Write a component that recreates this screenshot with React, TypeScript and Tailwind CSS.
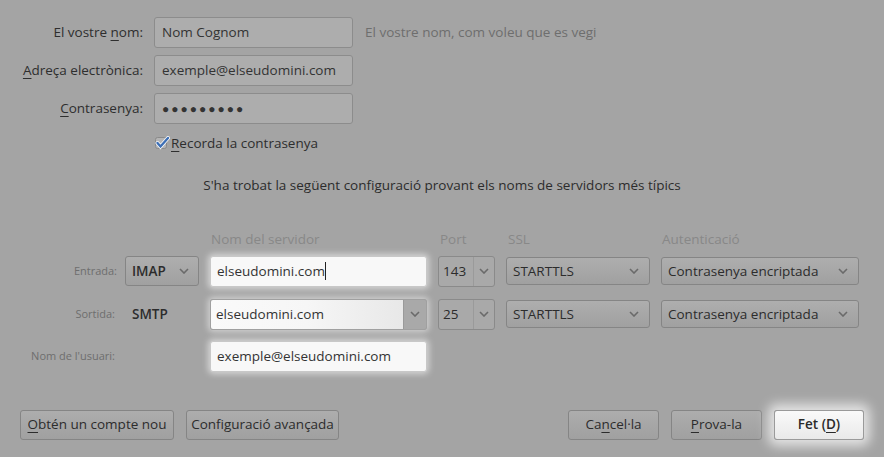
import React from 'react';

function Chevron() {
  return (
    <svg width="10" height="6" viewBox="0 0 10 6" className="shrink-0">
      <polyline points="1,1 5,5 9,1" fill="none" stroke="#6a6a6a" strokeWidth="1.6" />
    </svg>
  );
}

function Mn({ children }: { children: React.ReactNode }) {
  return <u className="underline underline-offset-[3px] decoration-1">{children}</u>;
}

function GrayInput({ children }: { children: React.ReactNode }) {
  return (
    <div className="ml-[11px] w-[199px] h-[31px] flex items-center px-[7px] rounded-[3px] border border-[#8c8c8c] bg-[#adadad] text-[13.5px] text-[#333]">
      {children}
    </div>
  );
}

function Select({ w, label, bold }: { w: string; label: string; bold?: boolean }) {
  return (
    <div
      className={`${w} h-[28px] flex items-center justify-between pl-[6px] pr-[10px] rounded-[3px] border border-[#858585] bg-gradient-to-b from-[#aeaeae] to-[#a0a0a0] text-[13.5px] text-[#2c2c2c] ${
        bold ? 'font-semibold' : ''
      }`}
    >
      <span>{label}</span>
      <Chevron />
    </div>
  );
}

function PortCombo({ value }: { value: string }) {
  return (
    <div className="ml-[11px] w-[57px] h-[31px] flex rounded-[3px] border border-[#8a8a8a] bg-[#a9a9a9] text-[13.5px] text-[#2c2c2c]">
      <div className="w-[35px] flex items-center pl-[4px] border-r border-[#9a9a9a]">{value}</div>
      <div className="flex-1 flex items-center justify-center">
        <Chevron />
      </div>
    </div>
  );
}

function Btn({ children, w, primary }: { children: React.ReactNode; w: string; primary?: boolean }) {
  return (
    <div
      className={`${w} h-[30px] flex items-center justify-center rounded-[3px] border text-[13.5px] ${
        primary
          ? 'border-[#9a9a9a] bg-gradient-to-b from-[#fafafa] to-[#e9e9e9] font-semibold text-[#2a2a2a] shadow-[0_0_12px_6px_rgba(255,255,255,0.7)]'
          : 'border-[#858585] bg-gradient-to-b from-[#adadad] to-[#a0a0a0] text-[#2c2c2c]'
      }`}
    >
      {children}
    </div>
  );
}

export default function App() {
  return (
    <div className="w-[884px] h-[457px] bg-[#a4a4a4] flex flex-col font-['Open_Sans','Liberation_Sans',sans-serif] text-[#2e2e2e] overflow-hidden">
      {/* Account fields */}
      <div className="pt-[17px] flex flex-col gap-[7px]">
        <div className="flex items-center">
          <div className="w-[143px] text-right text-[13.5px]">
            El vostre <Mn>n</Mn>om:
          </div>
          <GrayInput>Nom Cognom</GrayInput>
          <div className="ml-[12px] text-[13.5px] text-[#6e6e6e]">El vostre nom, com voleu que es vegi</div>
        </div>
        <div className="flex items-center">
          <div className="w-[143px] text-right text-[13.5px]">
            <Mn>A</Mn>dreça electrònica:
          </div>
          <GrayInput>exemple@elseudomini.com</GrayInput>
        </div>
        <div className="flex items-center">
          <div className="w-[143px] text-right text-[13.5px]">
            <Mn>C</Mn>ontrasenya:
          </div>
          <GrayInput>
            <span className="tracking-[2px] text-[12px]">●●●●●●●●●</span>
          </GrayInput>
        </div>
      </div>

      <div className="mt-[11px] ml-[155px] flex items-center h-[16px] text-[13.5px]">
        <svg width="16" height="14" viewBox="0 0 16 14">
          <rect x="0.5" y="1.5" width="11" height="11" rx="2" fill="#b4b4b4" stroke="#8a8a8a" />
          <path d="M2.5 7 L5.5 10.5 L13 2" fill="none" stroke="#ffffff" strokeWidth="3.8" strokeLinecap="round" />
          <path d="M2.5 7 L5.5 10.5 L13 2" fill="none" stroke="#3d6fb5" strokeWidth="2.4" strokeLinecap="round" />
        </svg>
        <span>
          <Mn>R</Mn>ecorda la contrasenya
        </span>
      </div>

      <div className="mt-[24px] text-center text-[13.5px] text-[#2c2c2c]">
        S'ha trobat la següent configuració provant els noms de servidors més típics
      </div>

      {/* Server table */}
      <div className="mt-[34px] flex text-[13.5px] text-[#888888]">
        <div className="ml-[211px] w-[229px]">Nom del servidor</div>
        <div className="w-[68px]">Port</div>
        <div className="w-[154px]">SSL</div>
        <div>Autenticació</div>
      </div>

      <div className="mt-[6px] flex items-center">
        <div className="w-[117px] text-right text-[11px] text-[#6e6e6e]">Entrada:</div>
        <div className="ml-[8px]">
          <div className="w-[74px] h-[30px] flex items-center justify-between pl-[6px] pr-[9px] rounded-[3px] border border-[#858585] bg-gradient-to-b from-[#aeaeae] to-[#a0a0a0] text-[13.5px] font-semibold text-[#2c2c2c]">
            <span>IMAP</span>
            <Chevron />
          </div>
        </div>
        <div className="ml-[11px] w-[217px] h-[31px] flex items-center px-[6px] rounded-[3px] border border-[#c8c8c8] bg-[#f8f8f8] text-[13.5px] text-[#333] shadow-[0_0_6px_2px_rgba(255,255,255,0.55)]">
          elseudomini.com<span className="w-px h-[18px] bg-[#222]" />
        </div>
        <PortCombo value="143" />
        <div className="ml-[11px]">
          <Select w="w-[144px]" label="STARTTLS" />
        </div>
        <div className="ml-[11px]">
          <Select w="w-[198px]" label="Contrasenya encriptada" />
        </div>
      </div>

      <div className="mt-[12px] flex items-center">
        <div className="w-[115px] text-right text-[11px] text-[#6e6e6e]">Sortida:</div>
        <div className="ml-[17px] w-[67px] text-[13.5px] font-semibold text-[#2c2c2c]">SMTP</div>
        <div className="ml-[11px] w-[217px] h-[31px] flex rounded-[3px] border border-[#a0a0a0] overflow-hidden text-[13.5px] text-[#333] shadow-[0_0_6px_2px_rgba(255,255,255,0.5)]">
          <div className="flex-1 flex items-center px-[5px] bg-gradient-to-r from-[#fafafa] via-[#f6f6f6] to-[#e8e8e8]">
            elseudomini.com
          </div>
          <div className="w-[23px] flex items-center justify-center bg-[#a9a9a9] border-l border-[#9a9a9a]">
            <Chevron />
          </div>
        </div>
        <PortCombo value="25" />
        <div className="ml-[11px]">
          <Select w="w-[144px]" label="STARTTLS" />
        </div>
        <div className="ml-[11px]">
          <Select w="w-[198px]" label="Contrasenya encriptada" />
        </div>
      </div>

      <div className="mt-[11px] flex items-center">
        <div className="w-[115px] text-right text-[11px] text-[#6e6e6e]">Nom de l'usuari:</div>
        <div className="ml-[95px] w-[217px] h-[31px] flex items-center px-[6px] rounded-[3px] border border-[#c8c8c8] bg-[#f8f8f8] text-[13.5px] text-[#333] shadow-[0_0_6px_2px_rgba(255,255,255,0.55)]">
          exemple@elseudomini.com
        </div>
      </div>

      {/* Buttons */}
      <div className="mt-[38px] flex items-center px-[20px]">
        <Btn w="w-[154px]">
          <span>
            <Mn>O</Mn>btén un compte nou
          </span>
        </Btn>
        <div className="ml-[12px]">
          <Btn w="w-[153px]">Configuració avançada</Btn>
        </div>
        <div className="ml-auto flex gap-[12px]">
          <Btn w="w-[91px]">
            <span>
              Ca<Mn>n</Mn>cel·la
            </span>
          </Btn>
          <Btn w="w-[91px]">
            <span>
              <Mn>P</Mn>rova-la
            </span>
          </Btn>
          <Btn w="w-[90px]" primary>
            <span>
              Fet (<Mn>D</Mn>)
            </span>
          </Btn>
        </div>
      </div>
    </div>
  );
}
